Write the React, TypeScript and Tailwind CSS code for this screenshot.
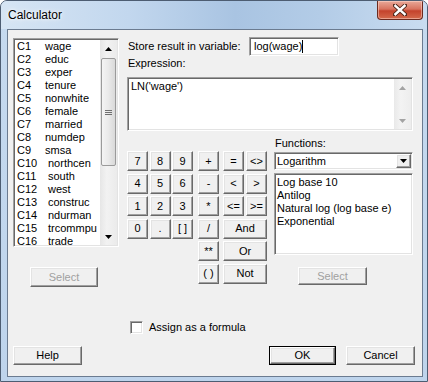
import React from 'react';
import clsx from 'clsx';

const columns = [
  ['C1', 'wage'],
  ['C2', 'educ'],
  ['C3', 'exper'],
  ['C4', 'tenure'],
  ['C5', 'nonwhite'],
  ['C6', 'female'],
  ['C7', 'married'],
  ['C8', 'numdep'],
  ['C9', 'smsa'],
  ['C10', 'northcen'],
  ['C11', 'south'],
  ['C12', 'west'],
  ['C13', 'construc'],
  ['C14', 'ndurman'],
  ['C15', 'trcommpu'],
  ['C16', 'trade'],
];

const functions = ['Log base 10', 'Antilog', 'Natural log (log base e)', 'Exponential'];

// classic raised 3D button
const Btn: React.FC<{ className?: string; disabled?: boolean; children: React.ReactNode }> = ({ className, disabled, children }) => (
  <div
    className={clsx(
      'flex items-center justify-center bg-[#f0f0f0] border border-t-white border-l-white border-r-[#696969] border-b-[#696969] shadow-[inset_-1px_-1px_0_#a0a0a0,inset_1px_1px_0_#e3e3e3] text-[11px] leading-none',
      disabled ? 'text-[#a0a0a0]' : 'text-black',
      className
    )}
  >
    {children}
  </div>
);

const Arrow: React.FC<{ down?: boolean; color?: string }> = ({ down, color = '#000' }) => (
  <svg width="7" height="4" viewBox="0 0 7 4">
    <polygon points={down ? '0,0 7,0 3.5,4' : '0,4 7,4 3.5,0'} fill={color} />
  </svg>
);

const sunken = 'border border-t-[#a0a0a0] border-l-[#a0a0a0] border-r-white border-b-white shadow-[inset_1px_1px_0_#696969,inset_-1px_-1px_0_#e3e3e3] bg-white';

export default function App() {
  return (
    <div className="w-[428px] h-[382px] overflow-hidden rounded-t-[7px] border border-[#4d5d72] bg-[linear-gradient(180deg,#c6daef,#bed4ec)] font-['Liberation_Sans',Arial,sans-serif] text-[11px] text-black flex flex-col">
      {/* Title bar */}
      <div className="h-[28px] flex justify-between bg-[linear-gradient(90deg,#d6e5f4_0%,#c2d7ee_30%,#a9c4e2_55%,#b3cce7_75%,#c9dcf0_100%)]">
        <div className="pl-[7px] pt-[6px] text-[12px] leading-[16px] [text-shadow:0_0_6px_#ffffff,0_0_3px_#ffffff]">Calculator</div>
        <div className="mr-[4px] w-[46px] h-[19px] rounded-b-[4px] border border-t-0 border-[#6b2a1f] bg-[linear-gradient(180deg,#e9a999_0%,#d8735f_45%,#c4432c_55%,#d46a4c_100%)] flex items-center justify-center shadow-[inset_0_0_0_1px_rgba(255,220,210,0.5)]">
          <svg width="14" height="12" viewBox="0 0 14 12">
            <path d="M2 1.5 L12 10.5 M12 1.5 L2 10.5" stroke="#4a2418" strokeWidth="4.2" strokeLinecap="square" />
            <path d="M2.4 1.8 L11.6 10.2 M11.6 1.8 L2.4 10.2" stroke="#ffffff" strokeWidth="2.4" strokeLinecap="square" />
          </svg>
        </div>
      </div>

      {/* Client area */}
      <div className="ml-[6px] w-[416px] h-[348px] border border-[#6b7b90] bg-[#f0f0f0] flex flex-col">
        <div className="h-[260px] flex">
          {/* Variable list */}
          <div className="ml-[5px] mt-[8px] flex flex-col">
            <div className={clsx(sunken, 'w-[106px] h-[209px] flex')}>
              <div className="flex-1 pt-[1px] pl-[3px]">
                {columns.map(([c, n]) => (
                  <div key={c} className="h-[13px] leading-[13px] flex">
                    <span className={c.length > 2 ? 'w-[31px]' : 'w-[28px]'}>{c}</span>
                    <span>{n}</span>
                  </div>
                ))}
              </div>
              <div className="w-[17px] my-[1px] mr-[1px] bg-[linear-gradient(90deg,#e6e6e6,#f2f2f2_40%,#ebebeb)] flex flex-col">
                <div className="h-[17px] flex items-center justify-center">
                  <Arrow />
                </div>
                <div className="mt-[1px] mx-[1px] h-[108px] rounded-[2px] border border-[#9a9a9a] bg-[linear-gradient(90deg,#f4f4f4,#e9e9e9_50%,#d9d9d9)] flex items-center justify-center">
                  <div className="flex flex-col gap-[1px]">
                    <div className="w-[7px] h-[1px] bg-[#6f6f6f]" />
                    <div className="w-[7px] h-[1px] bg-[#6f6f6f]" />
                    <div className="w-[7px] h-[1px] bg-[#6f6f6f]" />
                  </div>
                </div>
                <div className="flex-1" />
                <div className="h-[17px] flex items-center justify-center">
                  <Arrow down />
                </div>
              </div>
            </div>
            <Btn disabled className="mt-[20px] ml-[17px] w-[68px] h-[20px]">Select</Btn>
          </div>

          {/* Right side */}
          <div className="ml-[8px] mt-[7px] flex flex-col">
            <div className="flex h-[19px]">
              <div className="w-[122px] pl-[1px] flex items-center">Store result in variable:</div>
              <div className={clsx(sunken, 'w-[90px] h-[19px] flex items-center pl-[4px]')}>
                <span>log(wage)</span>
                <span className="w-[1px] h-[13px] bg-black" />
              </div>
            </div>
            <div className="mt-[1px] h-[13px] leading-[13px] pl-[1px]">Expression:</div>
            <div className={clsx(sunken, 'mt-[7px] w-[286px] h-[54px] flex')}>
              <div className="flex-1 pl-[3px] pt-[2px] leading-[13px]">LN('wage')</div>
              <div className="w-[17px] my-[1px] mr-[1px] bg-[linear-gradient(90deg,#e9e9e9,#f3f3f3_40%,#ededed)] flex flex-col justify-between">
                <div className="h-[17px] flex items-center justify-center">
                  <Arrow color="#a3a3a3" />
                </div>
                <div className="h-[17px] flex items-center justify-center">
                  <Arrow down color="#a3a3a3" />
                </div>
              </div>
            </div>

            <div className="flex">
              {/* Keypad */}
              <div className="mt-[20px] grid grid-cols-[22.5px_22.5px_26px_25px_23px_21px] grid-rows-[repeat(6,20px)] gap-y-[2.6px] w-[140px]">
                <Btn className="w-[21px]">7</Btn>
                <Btn className="w-[21px]">8</Btn>
                <Btn className="w-[21px]">9</Btn>
                <Btn className="w-[21px]">+</Btn>
                <Btn className="w-[21px]">=</Btn>
                <Btn className="w-[21px]">&lt;&gt;</Btn>

                <Btn className="w-[21px]">4</Btn>
                <Btn className="w-[21px]">5</Btn>
                <Btn className="w-[21px]">6</Btn>
                <Btn className="w-[21px]">-</Btn>
                <Btn className="w-[21px]">&lt;</Btn>
                <Btn className="w-[21px]">&gt;</Btn>

                <Btn className="w-[21px]">1</Btn>
                <Btn className="w-[21px]">2</Btn>
                <Btn className="w-[21px]">3</Btn>
                <Btn className="w-[21px]">*</Btn>
                <Btn className="w-[21px]">&lt;=</Btn>
                <Btn className="w-[21px]">&gt;=</Btn>

                <Btn className="w-[21px]">0</Btn>
                <Btn className="w-[21px]">.</Btn>
                <Btn className="w-[21px]">[ ]</Btn>
                <Btn className="w-[21px]">/</Btn>
                <Btn className="col-span-2 w-[44px]">And</Btn>

                <Btn className="col-start-4 w-[21px]">**</Btn>
                <Btn className="col-span-2 w-[44px]">Or</Btn>

                <Btn className="col-start-4 w-[21px]">( )</Btn>
                <Btn className="col-span-2 w-[44px]">Not</Btn>
              </div>

              {/* Functions */}
              <div className="ml-[7px] mt-[6px] flex flex-col">
                <div className="h-[13px] leading-[13px] pl-[1px]">Functions:</div>
                <div className={clsx(sunken, 'mt-[2px] w-[139px] h-[18px] flex')}>
                  <div className="flex-1 pl-[2px] flex items-center">Logarithm</div>
                  <Btn className="w-[15px] my-[1px] mr-[1px]">
                    <Arrow down />
                  </Btn>
                </div>
                <div className={clsx(sunken, 'mt-[3px] w-[139px] h-[82px] pl-[2px] pt-[2px]')}>
                  {functions.map((f) => (
                    <div key={f} className="h-[13px] leading-[13px]">{f}</div>
                  ))}
                </div>
                <Btn disabled className="mt-[12px] ml-[24px] w-[69px] h-[18px]">Select</Btn>
              </div>
            </div>
          </div>
        </div>

        {/* Assign as formula */}
        <div className="mt-[31px] ml-[122px] h-[13px] flex items-center">
          <div className={clsx(sunken, 'w-[13px] h-[13px]')} />
          <span className="ml-[6px]">Assign as a formula</span>
        </div>

        {/* Bottom buttons */}
        <div className="mt-[12px] flex">
          <Btn className="ml-[5px] w-[69px] h-[19px]">Help</Btn>
          <div className="ml-[187px] w-[67px] h-[19px] border border-black flex">
            <Btn className="flex-1">OK</Btn>
          </div>
          <Btn className="ml-[10px] w-[69px] h-[19px]">Cancel</Btn>
        </div>
      </div>
    </div>
  );
}
